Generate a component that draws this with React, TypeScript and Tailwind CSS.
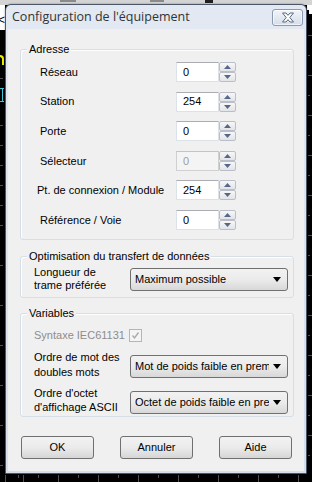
import React from "react";

const F = "font-['Liberation_Sans',Arial,sans-serif]";

function Spin() {
  return (
    <div className="flex flex-col w-[17px] h-[20px] gap-0">
      <div className="h-[10px] border border-[#b9bec8] rounded-[2px] bg-gradient-to-b from-[#f7f7f7] to-[#e2e4e8] flex items-center justify-center">
        <svg width="7" height="4" viewBox="0 0 7 4"><path d="M0 4 L3.5 0 L7 4 Z" fill="#56688a" /></svg>
      </div>
      <div className="h-[10px] border border-[#b9bec8] rounded-[2px] bg-gradient-to-b from-[#f7f7f7] to-[#e2e4e8] flex items-center justify-center">
        <svg width="7" height="4" viewBox="0 0 7 4"><path d="M0 0 L3.5 4 L7 0 Z" fill="#56688a" /></svg>
      </div>
    </div>
  );
}

function NumRow({ label, value, disabled, shift }: { label: string; value: string; disabled?: boolean; shift?: boolean }) {
  return (
    <div className="flex items-center h-[20px]">
      <div className={`text-[11px] text-black whitespace-nowrap ${shift ? "w-[139px] -ml-[3px]" : "w-[136px]"}`}>{label}</div>
      <div
        className={`w-[43px] h-[20px] border flex items-center pl-[6px] text-[11px] ${
          disabled ? "bg-[#f4f4f4] text-[#a0a0a0] border-[#d0d0d0] border-t-[#c4c4c4]" : "bg-white text-black border-[#dde2e8] border-t-[#abadb3]"
        }`}
      >
        {value}
      </div>
      <Spin />
    </div>
  );
}

function Combo({ text }: { text: string }) {
  return (
    <div className="w-[158px] h-[23px] border border-[#707070] rounded-[3px] bg-gradient-to-b from-[#f2f2f2] via-[#ebebeb] to-[#d8d8d8] flex items-center pl-[4px] pr-[6px] text-[11px] text-black">
      <span className="flex-1 overflow-hidden whitespace-nowrap">{text}</span>
      <svg width="8" height="5" viewBox="0 0 8 5" className="ml-[4px] shrink-0"><path d="M0 0 L8 0 L4 5 Z" fill="#000" /></svg>
    </div>
  );
}

function Group({ title, h, children }: { title: string; h: number; children: React.ReactNode }) {
  return (
    <div
      className="relative w-[274px] border border-[#d5dfe5] rounded-[3px] shadow-[inset_1px_1px_0_#ffffff]"
      style={{ height: h }}
    >
      <span className="absolute -top-[8px] left-[6px] px-[2px] bg-[#f0f0f0] text-[11px] leading-[14px] text-black whitespace-nowrap">
        {title}
      </span>
      {children}
    </div>
  );
}

function Btn({ label }: { label: string }) {
  return (
    <div className="w-[73px] h-[23px] border border-[#707070] rounded-[3px] bg-gradient-to-b from-[#f2f2f2] via-[#ebebeb] to-[#d6d6d6] flex items-center justify-center text-[11px] text-black">
      {label}
    </div>
  );
}

export default function App() {
  const leftTicks = [78, 125, 145, 165, 185, 205, 225, 265, 305, 345, 385, 425, 465];
  const rightTicks = [35, 55, 75, 95, 115, 135, 155, 175, 195, 215, 235, 255, 275, 295, 315, 335, 355, 375, 395, 415, 435, 455];
  const bottomTicks = [5, 18, 23, 38, 58, 78, 98, 118, 138, 158, 178, 198, 218, 238, 258, 278, 298];
  return (
    <div className={`relative w-[312px] h-[482px] bg-black overflow-hidden ${F} pl-[5px] pt-[4px]`}>
      {/* background desktop */}
      <div className="absolute left-0 top-0 w-[312px] h-[5px] bg-[#d4d4d4]" />
      <div className="absolute left-[205px] top-0 w-[8px] h-[3px] bg-[#202020]" />
      <div className="absolute left-[60px] top-0 w-[16px] h-[2px] bg-[#8a8a8a]" />
      <div className="absolute left-[150px] top-0 w-[14px] h-[2px] bg-[#8a8a8a]" />
      <div className="absolute left-0 top-[5px] w-[5px] h-[25px] bg-white" />
      <div className="absolute left-0 top-[14px] w-[5px] overflow-hidden text-[12px] leading-[12px] text-black">
        <span className="-ml-[2px] inline-block">&lt;</span>
      </div>
      <div className="absolute left-[307px] top-[5px] w-[5px] h-[9px] bg-white" />
      <div className="absolute left-[307px] top-[10px] w-[2px] h-[4px] bg-black" />
      <div className="absolute left-0 top-[55px] w-[4px] h-[10px] border-t-2 border-r-2 border-[#e8e800] rounded-tr-[4px]" />
      <div className="absolute left-[2px] top-[88px] w-[1px] h-[14px] bg-[#3cc8d8]" />
      <div className="absolute left-0 top-[88px] w-[4px] h-[1px] bg-[#3cc8d8]" />
      <div className="absolute left-0 top-[101px] w-[4px] h-[1px] bg-[#3cc8d8]" />
      {leftTicks.map((y) => (
        <div key={"l" + y} className="absolute left-0 w-[3px] h-[1px] bg-[#505050]" style={{ top: y }} />
      ))}
      {rightTicks.map((y, i) => (
        <div key={"r" + y} className="absolute left-[308px] h-[1px] bg-[#505050]" style={{ top: y, width: i % 2 ? 2 : 4 }} />
      ))}
      {bottomTicks.map((x, i) => (
        <div key={"b" + x} className="absolute top-[475px] w-[1px] bg-[#505050]" style={{ left: x, height: i % 2 ? 3 : 7 }} />
      ))}

      {/* dialog window */}
      <div className="relative w-[302px] h-[470px] border border-[#4b5766] rounded-t-[6px] bg-gradient-to-b from-[#e2e9f3] to-[#d6e0ec] flex flex-col shadow-[0_0_2px_rgba(0,0,0,0.4)]">
        <div className="h-[24px] flex items-center pl-[6px] pr-[3px] shrink-0">
          <span className="flex-1 font-['Open_Sans','Noto_Sans',sans-serif] text-[12.5px] text-[#333333] whitespace-nowrap pt-[1px]">
            Configuration de l'équipement
          </span>
          <div className="w-[31px] h-[17px] mt-[1px] border border-[#8b9ab0] rounded-[3px] bg-gradient-to-b from-[#f2f5fa] to-[#d5deea] flex items-center justify-center shadow-[inset_0_0_0_1px_rgba(255,255,255,0.6)]">
            <svg width="14" height="11" viewBox="0 0 14 11">
              <path
                d="M1.5 1 L5 1 L7 3.3 L9 1 L12.5 1 L8.8 5.5 L12.5 10 L9 10 L7 7.7 L5 10 L1.5 10 L5.2 5.5 Z"
                fill="#ffffff"
                stroke="#59687c"
                strokeWidth="1"
                strokeLinejoin="round"
              />
            </svg>
          </div>
        </div>
        <div className="mx-[2px] mb-[2px] flex-1 bg-[#f0f0f0] pl-[12px] pt-[20px]">
          <Group title="Adresse" h={191}>
            <div className="flex flex-col gap-[9.6px] pt-[12px] pl-[19px]">
              <NumRow label="Réseau" value="0" />
              <NumRow label="Station" value="254" />
              <NumRow label="Porte" value="0" />
              <NumRow label="Sélecteur" value="0" disabled />
              <NumRow label="Pt. de connexion / Module" value="254" shift />
              <NumRow label="Référence / Voie" value="0" />
            </div>
          </Group>
          <div className="h-[16px]" />
          <Group title="Optimisation du transfert de données" h={42}>
            <div className="flex items-center pl-[13px] pt-[10px]">
              <div className="w-[96px] text-[11px] leading-[13px] text-black -mt-[1px]">
                Longueur de
                <br />
                trame préférée
              </div>
              <Combo text="Maximum possible" />
            </div>
          </Group>
          <div className="h-[15px]" />
          <Group title="Variables" h={104}>
            <div className="flex flex-col pl-[13px] pt-[14px]">
              <div className="flex items-center h-[14px]">
                <div className="w-[96px] text-[11px] text-[#8d8d8d] whitespace-nowrap">Syntaxe IEC61131</div>
                <div className="w-[13px] h-[13px] border border-[#b5b5b5] bg-[#f4f4f4] flex items-center justify-center -ml-[1px]">
                  <svg width="9" height="9" viewBox="0 0 9 9"><path d="M1.5 4.5 L3.5 7 L7.5 1.5" fill="none" stroke="#a8a8a8" strokeWidth="1.3" /></svg>
                </div>
              </div>
              <div className="flex items-center mt-[11px]">
                <div className="w-[96px] text-[11px] leading-[15px] text-black -mt-[3px]">
                  Ordre de mot des
                  <br />
                  doubles mots
                </div>
                <Combo text="Mot de poids faible en premier" />
              </div>
              <div className="flex items-center mt-[10px]">
                <div className="w-[96px] text-[11px] leading-[14px] text-black -mt-[4px]">
                  Ordre d'octet
                  <br />
                  d'affichage ASCII
                </div>
                <Combo text="Octet de poids faible en premier" />
              </div>
            </div>
          </Group>
          <div className="flex gap-[26px] mt-[19px] ml-[1px]">
            <Btn label="OK" />
            <Btn label="Annuler" />
            <Btn label="Aide" />
          </div>
        </div>
      </div>
    </div>
  );
}
